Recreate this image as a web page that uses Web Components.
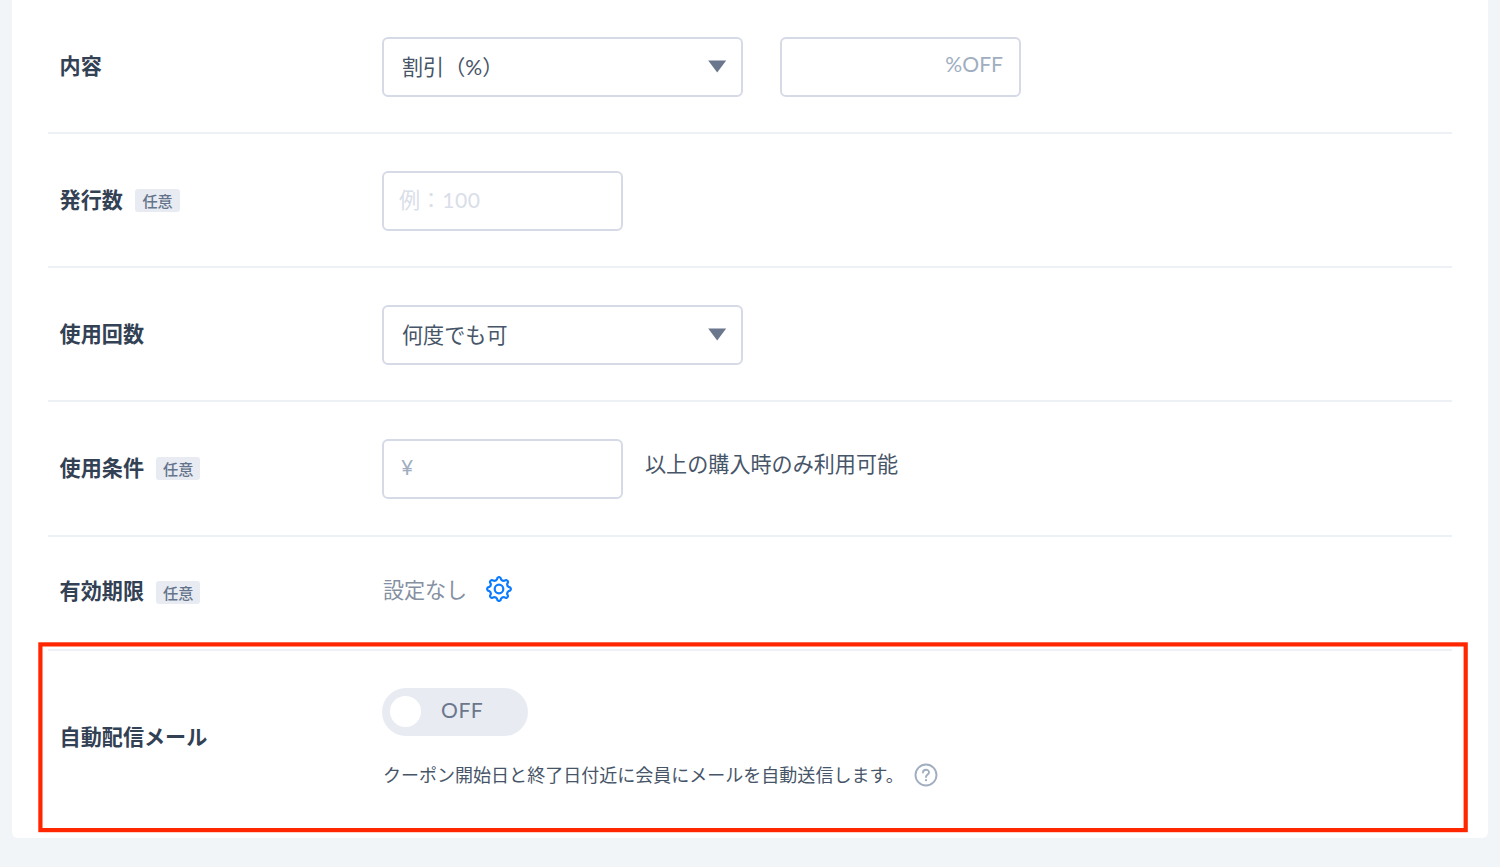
<!DOCTYPE html>
<html lang="ja">
<head>
<meta charset="utf-8">
<title>クーポン設定</title>
<style>
body{
	margin:0;
	height:867px;
	overflow:hidden;
	background:#f1f5f8;
	color:#475569;
	font-family:Lato,"Noto Sans CJK JP",sans-serif;
	font-size:21.1px;
	line-height:30px;
}
</style>
</head>
<body>
<coupon-card>
	<form-row label="内容">
		<select-box>割引（%）</select-box>
		<text-box class="percent" align="end">%OFF</text-box>
	</form-row>
	<form-row label="発行数" optional class="count">
		<text-box class="example">例：100</text-box>
	</form-row>
	<form-row label="使用回数">
		<select-box>何度でも可</select-box>
	</form-row>
	<form-row label="使用条件" optional class="condition">
		<text-box class="yen">¥</text-box>
		<span class="after">以上の購入時のみ利用可能</span>
	</form-row>
	<form-row label="有効期限" optional class="limit">
		<span class="none">設定なし</span>
		<gear-icon></gear-icon>
	</form-row>
	<form-row label="自動配信メール" class="mail">
		<div class="stack">
			<toggle-switch>OFF</toggle-switch>
			<help-note>クーポン開始日と終了日付近に会員にメールを自動送信します。</help-note>
		</div>
	</form-row>
	<focus-frame slot="overlay"></focus-frame>
</coupon-card>
<style>
.percent{ margin-left:37px; color:#a0aec0; --pad:16px; --lift:-6px; }
.count{ --gap:12.5px; --drop:0px; }
.example{ color:#d9dee8; --pad:15px; letter-spacing:.5px; }
.yen{ color:#a0aec0; --pad:17px; --lift:-5px; }
.after{ margin:-10px 0 0 22px; }
.condition{ --bottom:36px; --shift:-3px; }
.limit{ --top:36px; --bottom:46px; --height:30px; --shift:3px; }
.none{ color:#8590a2; margin-left:1px; letter-spacing:-.1px; }
gear-icon{ margin:-2px 0 0 16px; }
.mail{ --top:37px; --bottom:48px; --height:102px; --line:0px; --shift:-5px; }
</style>
<script>
function define(name, html){
	let template = document.createElement("template");
	template.innerHTML = html;
	window.customElements.define(name, class extends HTMLElement{
		constructor(){
			super();
			this.attachShadow({mode: "open"}).appendChild(template.content.cloneNode(true))
		}
		connectedCallback(){
			let label = this.shadowRoot.querySelector(".js-label")
			if(label) label.textContent = this.getAttribute("label");
		}
	});
}

define("coupon-card", `
<style>
:host{
	display:block;
	position:relative;
	box-sizing:border-box;
	height:838px;
	margin:0 12px;
	padding:0 36px;
	background:white;
	border-radius:0 0 6px 6px;
}
</style>
<slot></slot>
<slot name="overlay"></slot>
`);

define("form-row", `
<style>
:host{
	display:grid;
	grid-template-columns:322px 1fr;
	align-items:center;
	height:var(--height,60px);
	padding:var(--top,37px) 0 var(--bottom,35px) 12px;
	border-bottom:var(--line,2px) solid #edf1f6;
}
.label{
	display:flex;
	align-items:center;
	gap:var(--gap,12px);
	margin-top:var(--shift,-2px);
	margin-left:-.4px;
	color:#334155;
	font-weight:600;
	white-space:nowrap;
}
.badge{
	display:none;
	margin-top:var(--drop,2px);
	padding:0 7px;
	height:23px;
	line-height:24px;
	border-radius:3px;
	background:#e8ebf2;
	color:#64748b;
	font-size:15.2px;
	font-weight:500;
}
:host([optional]) .badge{ display:block; }
.control{ display:flex; align-items:center; }
</style>
<div class="label"><span class="js-label"></span><span class="badge">任意</span></div>
<div class="control"><slot></slot></div>
`);

define("select-box", `
<style>
:host{
	display:flex;
	align-items:center;
	justify-content:space-between;
	box-sizing:border-box;
	width:361px;
	height:60px;
	padding:0 14px 0 18px;
	border:2px solid #d6dae6;
	border-radius:6px;
}
svg{ display:block; margin-top:-2px; }
</style>
<span><slot></slot></span>
<svg width="19" height="13"><path d="M.2 .5h18l-9 12z" fill="#6b778c"/></svg>
`);

define("text-box", `
<style>
:host{
	display:flex;
	align-items:center;
	box-sizing:border-box;
	width:241px;
	height:60px;
	padding:0 var(--pad);
	border:2px solid #d6dae6;
	border-radius:6px;
}
:host([align=end]){ justify-content:flex-end; }
span{ margin-top:var(--lift,-3px); }
</style>
<span><slot></slot></span>
`);

define("gear-icon", `
<style>
:host{ display:block; }
svg{ display:block; }
</style>
<svg width="32" height="32" viewBox="0 0 32 32" fill="none" stroke="#0b7bff" stroke-width="2.2" stroke-linejoin="round">
	<circle cx="16" cy="16" r="4.3"/>
	<path class="js-teeth"/>
</svg>
`);

define("toggle-switch", `
<style>
:host{
	display:flex;
	align-items:center;
	box-sizing:border-box;
	width:145.5px;
	height:48px;
	padding-left:8px;
	border-radius:24px;
	background:#e8ebf2;
	color:#6b778c;
}
.knob{
	width:31px;
	height:31px;
	margin:-1px 20px 0 0;
	border-radius:50%;
	background:white;
}
.text{ margin-top:-4px; letter-spacing:.5px; }
</style>
<span class="knob"></span><span class="text"><slot></slot></span>
`);

define("help-note", `
<style>
:host{
	display:flex;
	align-items:center;
	gap:10px;
	margin-top:24px;
	padding-left:1px;
	font-size:18.03px;
}
svg{ display:block; }
</style>
<span><slot></slot></span>
<svg width="24" height="24" viewBox="0 0 24 24" fill="none" stroke="#a0aec0" stroke-width="1.9">
	<circle cx="12" cy="12" r="10.5"/>
	<path d="M9 9.5C9 5.8 15 5.8 15 9.4C15 11.5 12 11.5 12 14" stroke-linecap="round"/>
	<circle cx="12" cy="17.1" r="1.2" fill="#a0aec0" stroke="none"/>
</svg>
`);

define("focus-frame", `
<style>
:host{
	display:block;
	position:absolute;
	left:26px;
	top:642px;
}
svg{ display:block; }
</style>
<svg width="1431" height="191"><rect x="2.4" y="2.4" width="1425.3" height="185.7" fill="none" stroke="#ff2600" stroke-width="4.2"/></svg>
`);

// eight rounded teeth around the hub
let d = "";
for(let i = 0; i < 8; i++){
	let at = (r, deg) => {
		let a = (i * 45 + deg - 90) * Math.PI / 180;
		return (16 + r * Math.cos(a)).toFixed(2) + " " + (16 + r * Math.sin(a)).toFixed(2);
	};
	d += (i ? "L" : "M") + at(9.8, -12) + "Q" + at(11.6, -9) + " " + at(11.7, -4) + "Q" + at(12, 0) + " " + at(11.7, 4) + "Q" + at(11.6, 9) + " " + at(9.8, 12) + "Q" + at(8.5, 22.5) + " " + at(9.8, 33);
}
document.querySelector("gear-icon").shadowRoot.querySelector(".js-teeth").setAttribute("d", d + "Z");
</script>
</body>
</html>
